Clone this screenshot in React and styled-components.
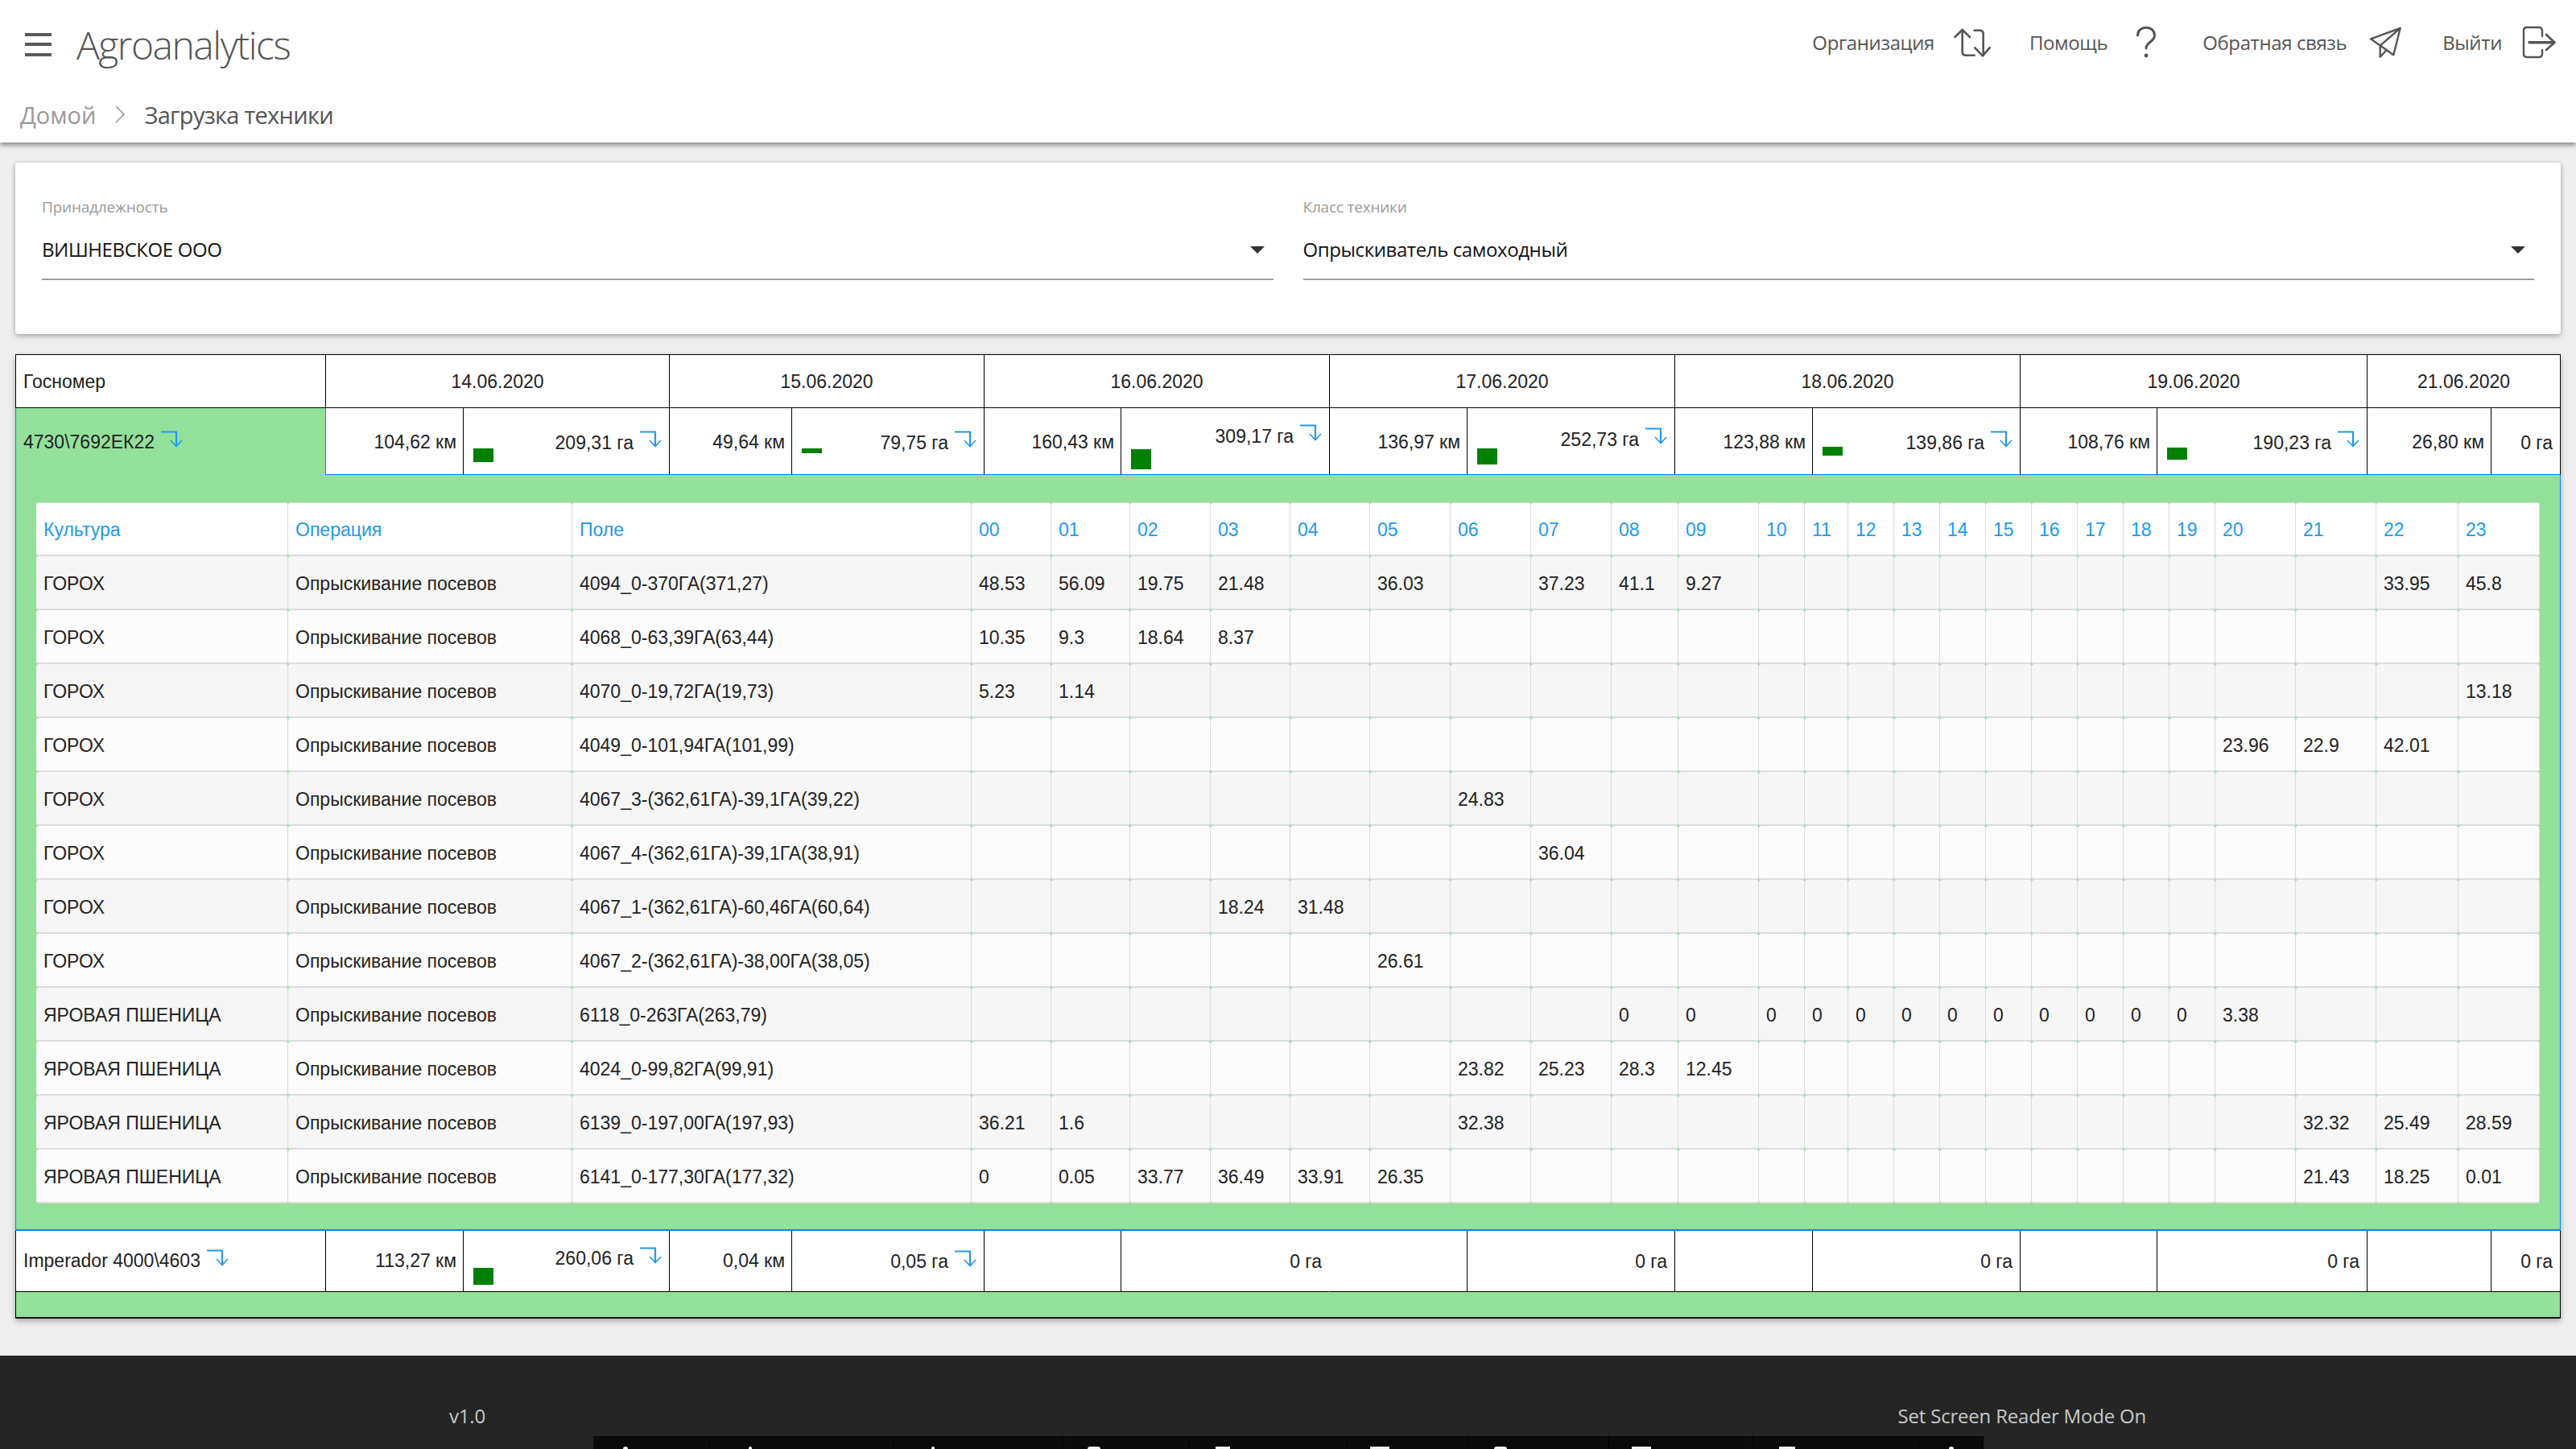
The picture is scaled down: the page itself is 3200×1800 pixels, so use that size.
import React from "react"
import styled, { createGlobalStyle } from "styled-components"

const dates = ["14.06.2020", "15.06.2020", "16.06.2020", "17.06.2020", "18.06.2020", "19.06.2020", "21.06.2020"]
const outerCols = [386, 171, 256, 152, 239, 170, 259, 171, 258, 171, 258, 170, 261, 154, 86]
const hourCols = [313, 353, 496, 99, 98, 100, 99, 99, 100, 100, 100, 83, 100, 57, 54, 57, 57, 57, 57, 57, 57, 57, 57, 100, 100, 102, 101]
const hours = Array.from({ length: 24 }, (_, i) => String(i).padStart(2, "0"))

const PEA = "ГОРОХ"
const WHEAT = "ЯРОВАЯ ПШЕНИЦА"

const fieldRows = [
  { crop: PEA, field: "4094_0-370ГА(371,27)", v: { 0: "48.53", 1: "56.09", 2: "19.75", 3: "21.48", 5: "36.03", 7: "37.23", 8: "41.1", 9: "9.27", 22: "33.95", 23: "45.8" } },
  { crop: PEA, field: "4068_0-63,39ГА(63,44)", v: { 0: "10.35", 1: "9.3", 2: "18.64", 3: "8.37" } },
  { crop: PEA, field: "4070_0-19,72ГА(19,73)", v: { 0: "5.23", 1: "1.14", 23: "13.18" } },
  { crop: PEA, field: "4049_0-101,94ГА(101,99)", v: { 20: "23.96", 21: "22.9", 22: "42.01" } },
  { crop: PEA, field: "4067_3-(362,61ГА)-39,1ГА(39,22)", v: { 6: "24.83" } },
  { crop: PEA, field: "4067_4-(362,61ГА)-39,1ГА(38,91)", v: { 7: "36.04" } },
  { crop: PEA, field: "4067_1-(362,61ГА)-60,46ГА(60,64)", v: { 3: "18.24", 4: "31.48" } },
  { crop: PEA, field: "4067_2-(362,61ГА)-38,00ГА(38,05)", v: { 5: "26.61" } },
  { crop: WHEAT, field: "6118_0-263ГА(263,79)", v: { 8: "0", 9: "0", 10: "0", 11: "0", 12: "0", 13: "0", 14: "0", 15: "0", 16: "0", 17: "0", 18: "0", 19: "0", 20: "3.38" } },
  { crop: WHEAT, field: "4024_0-99,82ГА(99,91)", v: { 6: "23.82", 7: "25.23", 8: "28.3", 9: "12.45" } },
  { crop: WHEAT, field: "6139_0-197,00ГА(197,93)", v: { 0: "36.21", 1: "1.6", 6: "32.38", 21: "32.32", 22: "25.49", 23: "28.59" } },
  { crop: WHEAT, field: "6141_0-177,30ГА(177,32)", v: { 0: "0", 1: "0.05", 2: "33.77", 3: "36.49", 4: "33.91", 5: "26.35", 21: "21.43", 22: "18.25", 23: "0.01" } },
]

const firstDays = [
  { km: "104,62 км", ha: "209,31 га", area: 209.31, top: 50, lift: 0 },
  { km: "49,64 км", ha: "79,75 га", area: 79.75, top: 50, lift: 0 },
  { km: "160,43 км", ha: "309,17 га", area: 309.17, top: 51, lift: 16 },
  { km: "136,97 км", ha: "252,73 га", area: 252.73, top: 50, lift: 8 },
  { km: "123,88 км", ha: "139,86 га", area: 139.86, top: 48, lift: 0 },
  { km: "108,76 км", ha: "190,23 га", area: 190.23, top: 49, lift: 0 },
  { km: "26,80 км", ha: "0 га", plain: true },
]

const secondDays = [
  { km: "113,27 км", ha: "260,06 га", area: 260.06, top: 46, lift: 10 },
  { km: "0,04 км", ha: "0,05 га", lift: 2 },
  { km: "", ha: "0 га", plain: true, open: true, lift: 2 },
  { km: "", ha: "0 га", plain: true, lift: 2 },
  { km: "", ha: "0 га", plain: true, lift: 2 },
  { km: "", ha: "0 га", plain: true, lift: 2 },
  { km: "", ha: "0 га", plain: true, lift: 2 },
]

const tabs = [
  { w: 145, tip: 6, at: 37, r: "3px 3px 0 0" },
  { w: 229, tip: 4, at: 48, r: "2px 2px 0 0" },
  { w: 210, tip: 4, at: 46, r: "2px 2px 0 0" },
  { w: 157, tip: 16, at: 30, r: "8px 8px 0 0" },
  { w: 196, tip: 18, at: 32, r: "0" },
  { w: 150, tip: 24, at: 28, r: "0" },
  { w: 175, tip: 16, at: 32, r: "8px 8px 0 0" },
  { w: 179, tip: 24, at: 28, r: "0" },
  { w: 206, tip: 20, at: 32, r: "0" },
  { w: 80, tip: 6, at: 37, r: "3px 3px 0 0" },
]

const GlobalStyle = createGlobalStyle`
  html, body {
    margin: 0;
    padding: 0;
    background: #eeeeee;
  }
  * {
    box-sizing: border-box;
  }
`

export default function App() {
  return (
    <Page>
      <GlobalStyle />
      <Header>
        <TopBar>
          <MenuButton>
            <i />
            <i />
            <i />
          </MenuButton>
          <Title>Agroanalytics</Title>
          <Nav>
            <NavItem $gap={24}>
              Организация
              <SwapIcon />
            </NavItem>
            <NavItem $gap={36} $left={48}>
              Помощь
              <HelpIcon />
            </NavItem>
            <NavItem $gap={28} $left={58}>
              Обратная связь
              <SendIcon />
            </NavItem>
            <NavItem $gap={25} $left={50}>
              Выйти
              <ExitIcon />
            </NavItem>
          </Nav>
        </TopBar>
        <Crumbs>
          <CrumbLink>Домой</CrumbLink>
          <svg width="12" height="22" viewBox="0 0 12 22" fill="none" stroke="#8a8a8a" strokeWidth="1.4">
            <path d="M1 1l10 10L1 21" />
          </svg>
          <CrumbCurrent>Загрузка техники</CrumbCurrent>
        </Crumbs>
      </Header>

      <Main>
        <FilterCard>
          <Select label="Принадлежность" value="ВИШНЕВСКОЕ ООО" />
          <Select label="Класс техники" value="Опрыскиватель самоходный" />
        </FilterCard>

        <LoadTable>
          <colgroup>
            {outerCols.map((w, i) => (
              <col key={i} width={w} />
            ))}
          </colgroup>
          <tbody>
            <tr>
              <HeadCell $first>Госномер</HeadCell>
              {dates.map((d) => (
                <HeadCell key={d} colSpan={2} $center>
                  {d}
                </HeadCell>
              ))}
            </tr>
            <tr>
              <NameCell $open>
                <NameText>
                  4730\7692ЕК22
                  <TurnIcon />
                </NameText>
              </NameCell>
              <DayCells days={firstDays} height={82} open />
            </tr>
            <tr>
              <DetailCell colSpan={15} $open>
                <HoursTable />
              </DetailCell>
            </tr>
            <tr>
              <NameCell>
                <NameText>
                  Imperador 4000\4603
                  <TurnIcon />
                </NameText>
              </NameCell>
              <DayCells days={secondDays} height={75} />
            </tr>
            <tr>
              <DetailCell colSpan={15} />
            </tr>
          </tbody>
        </LoadTable>
      </Main>

      <Footer>
        <FooterRow>
          <span>v1.0</span>
          <span>Set Screen Reader Mode On</span>
        </FooterRow>
        <Dock>
          {tabs.map((t, i) => (
            <DockTab key={i} $w={t.w} $at={t.at}>
              <DockTip $w={t.tip} $r={t.r} />
            </DockTab>
          ))}
        </Dock>
      </Footer>
    </Page>
  )
}

function Select({ label, value }) {
  return (
    <SelectBox>
      <SelectLabel>{label}</SelectLabel>
      <SelectValue>
        {value}
        <Caret />
      </SelectValue>
    </SelectBox>
  )
}

function DayCells({ days, height, open }) {
  return days.map((d, i) => (
    <React.Fragment key={i}>
      <KmCell $open={open}>{d.km}</KmCell>
      <HaCell $open={open} $noLine={d.open}>
        <HaBody $h={height}>
          {d.area ? <AreaBar $top={d.top} style={{ height: Math.round(d.area * 0.081) }} /> : <span />}
          <HaValue $lift={d.lift || 0}>
            {d.ha}
            {!d.plain && <TurnIcon />}
          </HaValue>
        </HaBody>
      </HaCell>
    </React.Fragment>
  ))
}

function HoursTable() {
  return (
    <Hours>
      <colgroup>
        {hourCols.map((w, i) => (
          <col key={i} width={w} />
        ))}
      </colgroup>
      <thead>
        <tr>
          <HourHead>Культура</HourHead>
          <HourHead>Операция</HourHead>
          <HourHead>Поле</HourHead>
          {hours.map((h) => (
            <HourHead key={h}>{h}</HourHead>
          ))}
        </tr>
      </thead>
      <tbody>
        {fieldRows.map((row, i) => (
          <tr key={row.field}>
            <HourCell $odd={i % 2 === 0}>{row.crop}</HourCell>
            <HourCell $odd={i % 2 === 0}>Опрыскивание посевов</HourCell>
            <HourCell $odd={i % 2 === 0}>{row.field}</HourCell>
            {hours.map((h, n) => (
              <HourCell key={h} $odd={i % 2 === 0}>
                {row.v[n]}
              </HourCell>
            ))}
          </tr>
        ))}
      </tbody>
    </Hours>
  )
}

function TurnIcon() {
  return (
    <Turn width="27" height="21" viewBox="0 0 27 21" fill="none" stroke="#2199ee">
      <path d="M0 1.5h19V19" strokeWidth="2.2" />
      <path d="M12 12l7 7.5 7-7.5" strokeWidth="1.6" />
    </Turn>
  )
}

function SwapIcon() {
  return (
    <svg width="46" height="36" viewBox="6 14 46 36" fill="none" stroke="#555" strokeWidth="2.6" strokeLinecap="round" strokeLinejoin="round">
      <path d="M7.5 25l9.2-9 9.3 9" />
      <path d="M16.7 16v27c0 3 1.5 4.7 4.5 4.7h10.5" />
      <path d="M31.7 16.7H38c3 0 4.7 1.5 4.7 4.5v26.5" />
      <path d="M32.3 38.3l9.6 10 8.8-10" />
    </svg>
  )
}

function HelpIcon() {
  return (
    <svg width="24" height="39" viewBox="234 14 24 39" fill="none" stroke="#555" strokeWidth="3" strokeLinecap="round">
      <path d="M235.5 25c0-13 21-13 21 0 0 8-10.5 8-10.5 16" />
      <circle cx="246" cy="50" r="2.4" fill="#555" stroke="none" />
    </svg>
  )
}

function SendIcon() {
  return (
    <svg width="41" height="40" viewBox="13 13 41 40" fill="none" stroke="#555" strokeWidth="2.4" strokeLinejoin="round">
      <path d="M15 28.3L51.7 15l-8.4 33.3z" />
      <path d="M51.7 15L26.7 36.7v14L35 41.7" />
    </svg>
  )
}

function ExitIcon() {
  return (
    <svg width="43" height="41" viewBox="203 12 43 41" fill="none" stroke="#555" strokeLinecap="round" strokeLinejoin="round">
      <path d="M228 25v-7c0-2.5-1.5-4-4-4h-15c-2.5 0-4 1.5-4 4v29c0 2.5 1.5 4 4 4h15c2.5 0 4-1.5 4-4v-5" strokeWidth="2.4" />
      <path d="M212 32.7h30" strokeWidth="3.6" />
      <path d="M233 23l10.5 9.7L233 42" strokeWidth="2.8" />
    </svg>
  )
}

const Page = styled.div`
  width: 3200px;
  height: 1800px;
  overflow: hidden;
  display: flex;
  flex-direction: column;
  background: #eeeeee;
  font-family: "Open Sans", "Liberation Sans", sans-serif;
`

const Header = styled.header`
  height: 177px;
  background: #ffffff;
  box-shadow: 0 3px 6px rgba(0, 0, 0, 0.45);
  position: relative;
  z-index: 2;
`

const TopBar = styled.div`
  display: flex;
  align-items: center;
  height: 110px;
  padding: 0 24px 0 31px;
`

const MenuButton = styled.div`
  width: 33px;
  height: 29px;
  display: flex;
  flex-direction: column;
  justify-content: space-between;
  margin-right: 31px;

  i {
    display: block;
    height: 4px;
    background: #5a5a5a;
  }
`

const Title = styled.div`
  font-family: "Open Sans", sans-serif;
  font-weight: 300;
  font-size: 48px;
  letter-spacing: -1.5px;
  color: #555555;
`

const Nav = styled.nav`
  margin-left: auto;
  margin-top: -5px;
  display: flex;
  align-items: center;
`

const NavItem = styled.div`
  display: flex;
  align-items: center;
  gap: ${(p) => p.$gap}px;
  margin-left: ${(p) => p.$left || 0}px;
  font-size: 24px;
  letter-spacing: -0.4px;
  color: #555555;
`

const Crumbs = styled.div`
  display: flex;
  align-items: center;
  gap: 24px;
  height: 64px;
  padding: 0 0 0 25px;
  font-size: 29px;
`

const CrumbLink = styled.span`
  color: #999999;
`

const CrumbCurrent = styled.span`
  color: #555555;
  letter-spacing: -0.7px;
`

const Main = styled.main`
  padding: 25px 19px 0;
`

const FilterCard = styled.section`
  height: 213px;
  display: grid;
  grid-template-columns: 1fr 1fr;
  gap: 37px;
  padding: 41px 33px 0;
  background: #ffffff;
  border-radius: 4px;
  box-shadow: 0 2px 6px rgba(0, 0, 0, 0.35);
`

const SelectBox = styled.div`
  display: flex;
  flex-direction: column;
  height: 105px;
  border-bottom: 2px solid #9e9e9e;
`

const SelectLabel = styled.div`
  margin-top: -1px;
  font-size: 19px;
  letter-spacing: -0.2px;
  line-height: 30px;
  color: #9a9a9a;
`

const SelectValue = styled.div`
  position: relative;
  margin-top: 21px;
  font-size: 24px;
  letter-spacing: -0.4px;
  line-height: 34px;
  color: #111111;
`

const Caret = styled.span`
  position: absolute;
  right: 11px;
  top: 13px;
  border-left: 9px solid transparent;
  border-right: 9px solid transparent;
  border-top: 9px solid #333333;
`

const LoadTable = styled.table`
  width: 3162px;
  margin-top: 25px;
  table-layout: fixed;
  border-collapse: separate;
  border-spacing: 0;
  font-family: "Liberation Sans", Arial, sans-serif;
  font-size: 23px;
  color: #222222;
  box-shadow: 0 3px 7px rgba(0, 0, 0, 0.3);
`

const HeadCell = styled.th`
  height: 67px;
  padding: 2px 9px 0;
  background: #ffffff;
  font-weight: 400;
  text-align: ${(p) => (p.$center ? "center" : "left")};
  border-top: 1px solid #000;
  border-bottom: 1px solid #000;
  border-right: 1px solid #000;
  border-left: ${(p) => (p.$first ? "1px solid #000" : "0")};
`

const NameCell = styled.td`
  padding: ${(p) => (p.$open ? "2px 9px 0" : "0 9px")};
  background: ${(p) => (p.$open ? "#93e09b" : "#ffffff")};
  border-left: 1px solid ${(p) => (p.$open ? "#0a84ff" : "#000")};
  border-right: ${(p) => (p.$open ? "1px solid #0a84ff" : "1px solid #000")};
  border-bottom: ${(p) => (p.$open ? "0" : "1px solid #000")};
`

const NameText = styled.div`
  display: flex;
  align-items: center;
  white-space: nowrap;
`

const KmCell = styled.td`
  padding: ${(p) => (p.$open ? "2px 8px 0 0" : "0 8px 0 0")};
  background: #ffffff;
  text-align: right;
  white-space: nowrap;
  border-right: 1px solid #000;
  border-bottom: 1px solid ${(p) => (p.$open ? "#0a84ff" : "#000")};
`

const HaCell = styled.td`
  padding: 0;
  background: #ffffff;
  white-space: nowrap;
  border-right: ${(p) => (p.$noLine ? "1px solid transparent" : "1px solid #000")};
  border-bottom: 1px solid ${(p) => (p.$open ? "#0a84ff" : "#000")};
`

const HaBody = styled.div`
  display: flex;
  justify-content: space-between;
  align-items: center;
  height: ${(p) => p.$h}px;
  padding: 0 9px 0 12px;
`

const AreaBar = styled.div`
  align-self: flex-start;
  width: 25px;
  margin-top: ${(p) => p.$top}px;
  background: #008000;
`

const HaValue = styled.div`
  display: flex;
  align-items: center;
  margin-bottom: ${(p) => p.$lift - 4}px;
`

const Turn = styled.svg`
  flex: none;
  margin: -9px 0 0 8px;
`

const DetailCell = styled.td`
  height: 33px;
  padding: ${(p) => (p.$open ? "34px 25px 32px 25px" : "0")};
  background: #93e09b;
  border-left: 1px solid ${(p) => (p.$open ? "#0a84ff" : "#000")};
  border-right: 1px solid ${(p) => (p.$open ? "#0a84ff" : "#000")};
  border-bottom: ${(p) => (p.$open ? "2px solid #0a84ff" : "2px solid #000")};
`

const Hours = styled.table`
  width: 3110px;
  table-layout: fixed;
  border-collapse: separate;
  border-spacing: 0;
`

const HourHead = styled.th`
  height: 67px;
  padding: 2px 9px 0;
  background: #ffffff;
  color: #1e9bea;
  font-weight: 400;
  text-align: left;
  white-space: nowrap;
  border: solid #dcdcdc;
  border-width: 1px 1px 2px 0;
  border-radius: 3px;
`

const HourCell = styled.td`
  height: 67px;
  padding: 3px 9px 0;
  background: ${(p) => (p.$odd ? "#f6f6f6" : "#fcfcfc")};
  white-space: nowrap;
  border: solid #dcdcdc;
  border-width: 0 1px 2px 0;
  border-radius: 3px;
`

const Footer = styled.footer`
  margin-top: 46px;
  flex: 1;
  display: flex;
  flex-direction: column;
  background: #252525;
`

const FooterRow = styled.div`
  display: flex;
  justify-content: space-between;
  padding: 58px 534px 0 558px;
  font-size: 24px;
  letter-spacing: -0.2px;
  line-height: 34px;
  color: #c9c9c9;
`

const Dock = styled.div`
  display: flex;
  width: 1727px;
  height: 16px;
  margin: auto 0 0 737px;
  background: #0a0a0a;
`

const DockTab = styled.div`
  width: ${(p) => p.$w}px;
  display: flex;
  align-items: flex-end;
  padding-left: ${(p) => p.$at}px;
  border-right: 1px solid #000;
`

const DockTip = styled.span`
  display: block;
  width: ${(p) => p.$w}px;
  height: 3px;
  background: #f2f2f2;
  border-radius: ${(p) => p.$r};
`
